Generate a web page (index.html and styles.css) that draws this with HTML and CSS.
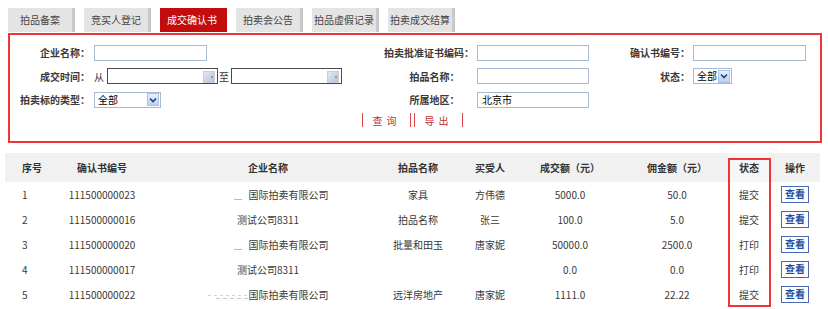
FILE: index.html
```html
<!DOCTYPE html>
<html lang="zh-CN">
<head>
<meta charset="utf-8">
<title>成交确认书</title>
<link rel="stylesheet" href="styles.css">
</head>
<body>
<div class="tabs">
  <div class="tab">拍品备案</div>
  <div class="tab">竞买人登记</div>
  <div class="tab active">成交确认书</div>
  <div class="tab">拍卖会公告</div>
  <div class="tab">拍品虚假记录</div>
  <div class="tab">拍卖成交结算</div>
</div>

<div class="filter">
  <div class="grid">
    <div class="lbl">企业名称：</div>
    <div class="fld"><span class="inp w113"></span></div>
    <div class="lbl mid">拍卖批准证书编码：</div>
    <div class="fld"><span class="inp w112"></span></div>
    <div class="lbl">确认书编号：</div>
    <div class="fld f3"><span class="inp w113"></span></div>

    <div class="lbl">成交时间：</div>
    <div class="fld"><span class="word">从</span><span class="date"></span><span class="word">至</span><span class="date"></span></div>
    <div class="lbl mid short">拍品名称：</div>
    <div class="fld"><span class="inp w112"></span></div>
    <div class="lbl">状态：</div>
    <div class="fld f3"><span class="sel s38"><span class="val">全部</span><span class="arr"><svg width="8" height="6" viewBox="0 0 8 6"><path d="M1 1.5 L4 4.5 L7 1.5" fill="none" stroke="#1d3f8a" stroke-width="1.6"/></svg></span></span></div>

    <div class="lbl wide">拍卖标的类型：</div>
    <div class="fld"><span class="sel s66"><span class="val">全部</span><span class="arr"><svg width="8" height="6" viewBox="0 0 8 6"><path d="M1 1.5 L4 4.5 L7 1.5" fill="none" stroke="#1d3f8a" stroke-width="1.6"/></svg></span></span></div>
    <div class="lbl mid short">所属地区：</div>
    <div class="fld"><span class="inp w112 txt">北京市</span></div>
    <div class="lbl"></div>
    <div class="fld f3"></div>
  </div>
  <div class="btns">
    <span class="btn">查询</span>
    <span class="btn">导出</span>
  </div>
</div>

<div class="table">
  <div class="row head">
    <div class="c c1">序号</div>
    <div class="c">确认书编号</div>
    <div class="c">企业名称</div>
    <div class="c">拍品名称</div>
    <div class="c">买受人</div>
    <div class="c">成交额（元）</div>
    <div class="c">佣金额（元）</div>
    <div class="c st">状态</div>
    <div class="c">操作</div>
  </div>
  <div class="row">
    <div class="c c1">1</div>
    <div class="c">111500000023</div>
    <div class="c"><span class="redact light"></span>国际拍卖有限公司</div>
    <div class="c">家具</div>
    <div class="c">方伟德</div>
    <div class="c">5000.0</div>
    <div class="c">50.0</div>
    <div class="c">提交</div>
    <div class="c"><span class="view">查看</span></div>
  </div>
  <div class="row">
    <div class="c c1">2</div>
    <div class="c">111500000016</div>
    <div class="c">测试公司8311</div>
    <div class="c">拍品名称</div>
    <div class="c">张三</div>
    <div class="c">100.0</div>
    <div class="c">5.0</div>
    <div class="c">提交</div>
    <div class="c"><span class="view">查看</span></div>
  </div>
  <div class="row">
    <div class="c c1">3</div>
    <div class="c">111500000020</div>
    <div class="c"><span class="redact light"></span>国际拍卖有限公司</div>
    <div class="c">批量和田玉</div>
    <div class="c">唐家妮</div>
    <div class="c">50000.0</div>
    <div class="c">2500.0</div>
    <div class="c">打印</div>
    <div class="c"><span class="view">查看</span></div>
  </div>
  <div class="row">
    <div class="c c1">4</div>
    <div class="c">111500000017</div>
    <div class="c">测试公司8311</div>
    <div class="c"></div>
    <div class="c"></div>
    <div class="c">0.0</div>
    <div class="c">0.0</div>
    <div class="c">打印</div>
    <div class="c"><span class="view">查看</span></div>
  </div>
  <div class="row">
    <div class="c c1">5</div>
    <div class="c">111500000022</div>
    <div class="c"><span class="redact heavy"></span>国际拍卖有限公司</div>
    <div class="c">远洋房地产</div>
    <div class="c">唐家妮</div>
    <div class="c">1111.0</div>
    <div class="c">22.22</div>
    <div class="c">提交</div>
    <div class="c"><span class="view">查看</span></div>
  </div>
  <div class="mark"></div>
</div>
</body>
</html>
```

FILE: styles.css
```css
* { box-sizing: border-box; }
html, body { margin: 0; padding: 0; background: #fff; }
body {
  font-family: "Noto Sans CJK SC", "Noto Sans", sans-serif;
  font-size: 10px;
  color: #333;
  width: 828px;
  height: 309px;
  overflow: hidden;
}

/* tabs */
.tabs {
  display: flex;
  padding: 8px 0 0 8px;
  height: 32px;
}
.tab {
  width: 67px;
  height: 24px;
  line-height: 24px;
  margin-right: 9px;
  text-align: center;
  background: #e4e4e4;
  border-right: 3px solid #c9c9c9;
  color: #444;
}
.tab.active {
  background: #c30d0d;
  border-right-color: #c30d0d;
  color: #fff;
}

/* filter box */
.filter {
  margin: 1px 0 0 8px;
  width: 814px;
  height: 110px;
  border: 2px solid #ee3434;
  padding: 6px 0 0 0;
}
.grid {
  display: grid;
  grid-template-columns: 82px 291px 92px 155px 62px 1fr;
  grid-auto-rows: 23.5px;
}
.lbl {
  display: flex;
  align-items: center;
  justify-content: flex-end;
  padding-right: 2px;
  font-weight: bold;
  color: #3a3a3a;
  white-space: nowrap;
}
.lbl.mid { justify-content: center; padding-right: 0; }
.lbl.mid.short { padding-left: 11px; }
.fld {
  display: flex;
  align-items: center;
  padding-left: 2px;
}
.fld.f3 { padding-left: 1px; }
.inp {
  display: block;
  height: 16px;
  border: 1px solid #a7bad2;
  background: #fff;
}
.inp.txt { padding-left: 4px; line-height: 14px; color: #000; }
.w113 { width: 113px; }
.w112 { width: 112px; }
.word { padding: 0 2px 0 0; color: #333; }
.word + .date { margin-left: 1px; }
.date {
  position: relative;
  display: block;
  width: 111px;
  height: 16px;
  border: 1px solid #4a4a4a;
  background: #fff;
}
.date::after {
  content: "";
  position: absolute;
  right: 2px;
  top: 2px;
  width: 10px;
  height: 10px;
  background: linear-gradient(135deg, #e2e9f3 0%, #b4c4dc 100%);
  border: 1px solid #c4cedb;
}
.date::before {
  content: "";
  position: absolute;
  right: 4px;
  top: 7px;
  width: 2px;
  height: 2px;
  background: #e07a7a;
  z-index: 1;
}
.date + .word { padding: 0 1px 0 1px; }
.sel {
  display: flex;
  align-items: center;
  justify-content: space-between;
  height: 16px;
  border: 1px solid #a7bad2;
  background: #fff;
  padding: 0 1px 0 3px;
  color: #000;
}
.s66 { width: 67px; }
.s38 { width: 39px; }
.sel .val { line-height: 14px; }
.arr {
  display: flex;
  align-items: center;
  justify-content: center;
  width: 12px;
  height: 13px;
  border: 1px solid #a9c0e6;
  background: linear-gradient(#e8f0fc, #bcd0f2);
}

/* buttons */
.btns {
  display: flex;
  justify-content: center;
  gap: 3px;
  margin-top: 1.5px;
  padding-right: 6px;
}
.btn {
  display: block;
  height: 14px;
  line-height: 15px;
  padding: 0 9px 0 10px;
  letter-spacing: 4px;
  border-left: 1px solid #e04a4a;
  border-right: 1px solid #e04a4a;
  color: #c43030;
}

/* table */
.table {
  position: relative;
  margin: 10px 0 0 5px;
  width: 815px;
}
.row {
  display: grid;
  grid-template-columns: 33px 128px 204px 96px 48px 112px 102px 42px 50px;
  height: 25px;
  align-items: center;
}
.row.head {
  height: 29px;
  background: #f1f1f1;
  font-weight: bold;
  color: #333;
}
.row.head .st { background: #f6f6f6; align-self: stretch; display: flex; align-items: center; justify-content: center; }
.c {
  text-align: center;
  white-space: nowrap;
}
.c.c1 { text-align: left; padding-left: 17px; }
.row:not(.head) .c { color: #383838; }
.redact {
  display: inline-block;
  width: 41px;
  height: 10px;
  vertical-align: middle;
}
.redact.light {
  background: linear-gradient(#bbb, #bbb) 26px 8px / 8px 1px no-repeat;
}
.redact.heavy {
  background:
    repeating-linear-gradient(90deg, #d4d4d4 0 3px, transparent 3px 6px) 0 4px / 40px 1px no-repeat,
    repeating-linear-gradient(90deg, #c8c8c8 0 4px, transparent 4px 7px) 8px 7px / 32px 1px no-repeat;
}
.view {
  display: inline-block;
  width: 28px;
  height: 17px;
  line-height: 14px;
  border: 1.5px solid #4a68b8;
  color: #2b4d9e;
  font-weight: bold;
  background: #fff;
}
.mark {
  position: absolute;
  left: 723px;
  top: 5px;
  width: 43px;
  height: 149px;
  border: 2px solid #ee3434;
  pointer-events: none;
}
```
